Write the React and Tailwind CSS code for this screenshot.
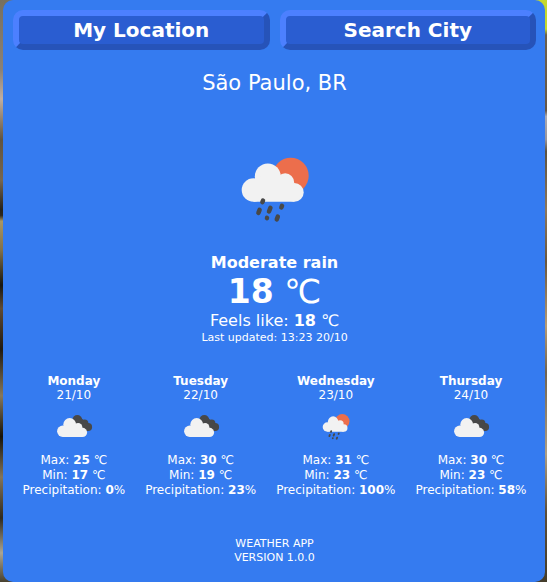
const days = [
  { day: "Monday", date: "21/10", icon: "clouds", max: 25, min: 17, rain: 0 },
  { day: "Tuesday", date: "22/10", icon: "clouds", max: 30, min: 19, rain: 23 },
  { day: "Wednesday", date: "23/10", icon: "rain", max: 31, min: 23, rain: 100 },
  { day: "Thursday", date: "24/10", icon: "clouds", max: 30, min: 23, rain: 58 },
];

const drops = [
  [37.7, 61.3, 1.6],
  [44.7, 69.7, 3.6],
  [34, 71.3, 3],
  [56.7, 66.7, 1.6],
  [42, 78, 0.1],
  [52.3, 78, 2.6],
];

function RainIcon({ className }) {
  return (
    <svg viewBox="0 0 100 100" className={className} role="img" aria-label="Rain">
      <circle cx="65.7" cy="35.7" r="18" fill="#ec6e4c" />
      <g fill="#f2f2f2">
        <circle cx="28.5" cy="50" r="11.8" />
        <circle cx="42.8" cy="36.4" r="13" />
        <circle cx="60.2" cy="42.2" r="8.9" />
        <circle cx="69.3" cy="52.4" r="9.4" />
        <path d="M28.5 40 L42 34 L60 38 L69.3 46 V61.8 H28.5 Z" />
      </g>
      <g stroke="#484848" strokeWidth="4.5" strokeLinecap="round">
        {drops.map(([x, y, h]) => (
          <line key={x} x1={x + h * 0.2} y1={y - h / 2} x2={x - h * 0.2} y2={y + h / 2} />
        ))}
      </g>
    </svg>
  );
}

function CloudsIcon({ className }) {
  return (
    <svg viewBox="0 0 40 40" className={className} role="img" aria-label="Clouds">
      <g fill="#484848">
        <circle cx="23.3" cy="13" r="4.9" />
        <circle cx="30.6" cy="16.2" r="3.8" />
        <circle cx="34.2" cy="20" r="3.9" />
        <path d="M20 14 L26 10 L34 17 V23.9 H24 Z" />
      </g>
      <g fill="#f2f2f2">
        <circle cx="8.8" cy="24.3" r="5.7" />
        <circle cx="15.7" cy="17.5" r="6.4" />
        <circle cx="24.1" cy="20.4" r="4.3" />
        <circle cx="28.5" cy="25.4" r="4.6" />
        <path d="M8.8 20 L15 17 L24 18 L28.5 23 V30 H8.8 Z" />
      </g>
    </svg>
  );
}

function PanelButton({ children }) {
  return (
    <button
      type="button"
      className="h-10 flex-1 rounded-[10px] border-6 border-t-[#4c80ff] border-r-[#2653b9] border-b-[#2653b9] border-l-[#4c80ff] bg-[#2a5dd1] text-xl leading-7 font-bold"
    >
      {children}
    </button>
  );
}

function Forecast({ day, date, icon, max, min, rain }) {
  const Icon = icon === "rain" ? RainIcon : CloudsIcon;
  return (
    <li className="flex flex-col items-center text-xs leading-[15px] whitespace-nowrap">
      <h2 className="leading-[14px] font-bold">{day}</h2>
      <p className="leading-[14px]">{date}</p>
      <Icon className="mt-[5px] mb-[6px] size-10" />
      <p>Max: <b>{max}</b> ℃</p>
      <p>Min: <b>{min}</b> ℃</p>
      <p>Precipitation: <b>{rain}</b>%</p>
    </li>
  );
}

export default function App() {
  return (
    <div className="min-h-screen bg-[linear-gradient(#77705f,#8b8175_12%,#c0aea0_17%,#62543f_24%,#77664f_31%,#26221a_36%,#2e271b_37%,#a89665_38%,#81704a_43%,#18160f_49%,#604b35_53%,#211a10_60%,#86775b_68%,#171309_75%,#83745a_82%,#302a1d_89%,#aaa493_95%,#48412f),linear-gradient(#c4d82d,#c4d82d_5%,#6b604c_6%,#655747_19%,#aaa9b1_20%,#99959b_24%,#5b5240_26%,#8d775a_36%,#68563d_45%,#b59b75_56%,#70634f_64%,#ad9e83_78%,#5c4e38_88%,#443d2b)] bg-[length:50%_100%] bg-[position:left,right] bg-no-repeat pr-0.5 pl-[3px] font-['DejaVu_Sans',sans-serif] text-white">
      <main className="flex min-h-screen flex-col items-center rounded-[10px] bg-[#357bf0] pt-2.5 pr-[9px] pb-2.5 pl-2.5 text-center">
        <nav className="flex w-full gap-2.5">
          <PanelButton>My Location</PanelButton>
          <PanelButton>Search City</PanelButton>
        </nav>

        <h1 className="mt-[21px] text-[21px] leading-6">São Paulo, BR</h1>

        <section className="mt-[45px] flex flex-col items-center">
          <RainIcon className="size-[100px]" />
          <p className="mt-[13px] leading-5 font-bold">Moderate rain</p>
          <p className="text-[33px] leading-[38px]"><b>18</b> ℃</p>
          <p className="leading-5">Feels like: <b>18</b> ℃</p>
          <p className="text-[11px] leading-[14px]">Last updated: 13:23 20/10</p>
        </section>

        <ul className="mt-[29px] flex justify-center gap-5">
          {days.map((entry) => (
            <Forecast key={entry.day} {...entry} />
          ))}
        </ul>

        <footer className="mt-auto pb-[7px] text-[11px] leading-[14px]">
          <p>WEATHER APP</p>
          <p>VERSION 1.0.0</p>
        </footer>
      </main>
    </div>
  );
}
